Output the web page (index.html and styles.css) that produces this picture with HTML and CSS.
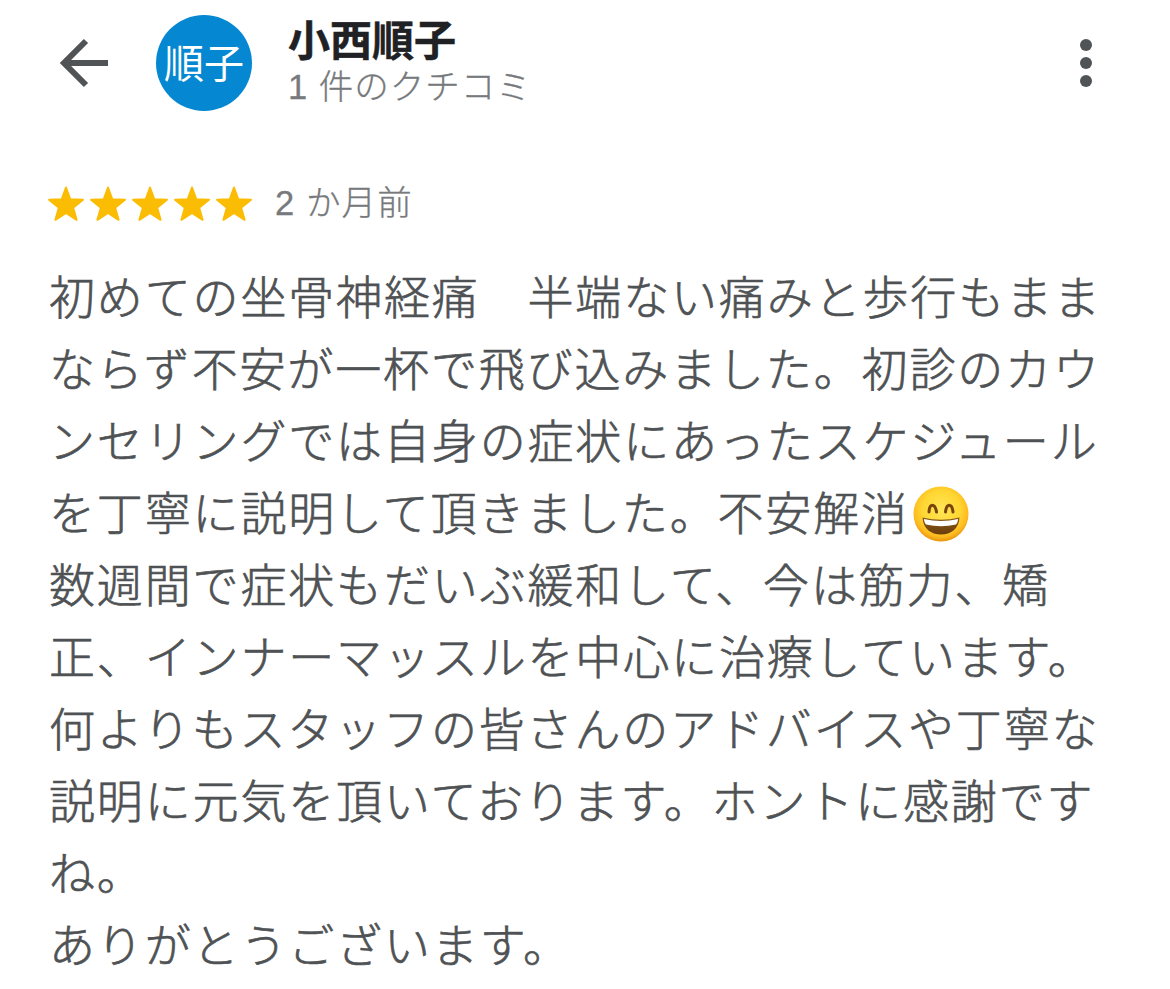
FILE: index.html
```html
<!DOCTYPE html>
<html lang="ja">
  <head>
    <meta charset="UTF-8" />
    <meta name="viewport" content="width=device-width, initial-scale=1.0" />
    <title>クチコミ</title>
    <link rel="stylesheet" href="styles.css">
  </head>
  <body>
    <header class="header">
      <button class="back" aria-label="戻る">
        <svg width="50" height="50" viewBox="0 0 50 50">
          <path d="M49 25H5M27 3L5 25l22 22" />
        </svg>
      </button>
      <div class="avatar">順子</div>
      <div class="author">
        <h1>小西順子</h1>
        <p>1 件のクチコミ</p>
      </div>
      <button class="menu" aria-label="メニュー">
        <svg width="12" height="50" viewBox="0 0 12 50">
          <circle cx="6" cy="7" r="6" />
          <circle cx="6" cy="25" r="6" />
          <circle cx="6" cy="43" r="6" />
        </svg>
      </button>
    </header>

    <div class="rating">
      <svg class="stars" width="204" height="36" viewBox="0 0 204 36">
        <defs>
          <path id="star" d="M18 1.500l4.300 11.800 12.700.5-9.900 7.800 3.500 12.200L18 26.800 7.400 33.800l3.500-12.200L1 13.800l12.700-.5z" />
        </defs>
        <use href="#star" x="0" />
        <use href="#star" x="42" />
        <use href="#star" x="84" />
        <use href="#star" x="126" />
        <use href="#star" x="168" />
      </svg>
      <span class="date">2 か月前</span>
    </div>

    <div class="review">
      <p>初めての坐骨神経痛　半端ない痛みと歩行もまま</p>
      <p>ならず不安が一杯で飛び込みました。初診のカウ</p>
      <p>ンセリングでは自身の症状にあったスケジュール</p>
      <p class="with-emoji">
        <span>を丁寧に説明して頂きました。不安解消</span>
        <svg class="emoji" width="56" height="56" viewBox="0 0 56 56" role="img" aria-label="笑顔">
          <defs>
            <radialGradient id="face" cx="50%" cy="42%" r="58%">
              <stop offset="0" stop-color="#ffe658" />
              <stop offset="0.6" stop-color="#ffd631" />
              <stop offset="0.85" stop-color="#fdbb1f" />
              <stop offset="1" stop-color="#e8920d" />
            </radialGradient>
            <linearGradient id="mouth" x1="0" y1="0" x2="0" y2="1">
              <stop offset="0" stop-color="#8a5a1c" />
              <stop offset="1" stop-color="#6b3d0c" />
            </linearGradient>
          </defs>
          <circle cx="28" cy="28" r="27.500" fill="url(#face)" />
          <path class="eye" d="M16 26c.5-9 6-9 7.500 0M32.500 26c1-9 6.500-9 7.500 0" />
          <path d="M9.500 31.500Q28 36 46.500 31.500C46 42.500 38 48.500 28 48.500S10 42.500 9.500 31.500z" fill="url(#mouth)" />
          <path d="M11 33Q28 37 45 33C45 35.500 44 37.500 43 38.500Q28 42 13 38.500C12 37.500 11 35.500 11 33z" fill="#fff" />
        </svg>
      </p>
      <p>数週間で症状もだいぶ緩和して、今は筋力、矯</p>
      <p>正、インナーマッスルを中心に治療しています。</p>
      <p>何よりもスタッフの皆さんのアドバイスや丁寧な</p>
      <p>説明に元気を頂いております。ホントに感謝です</p>
      <p>ね。</p>
      <p>ありがとうございます。</p>
    </div>
  </body>
</html>
```

FILE: styles.css
```css
body {
  margin: 0;
  background: #fff;
  color: #4f5254;
  font-family: "Liberation Sans", "Noto Sans CJK JP", sans-serif;
}
h1,
p {
  margin: 0;
}
button {
  padding: 0;
  border: 0;
  background: none;
}
.header {
  display: flex;
  height: 126px;
  align-items: center;
  padding: 0 78px 0 59px;
}
.back svg,
.menu svg {
  display: block;
}
.back path {
  fill: none;
  stroke: #515456;
  stroke-width: 6;
}
.menu {
  margin-left: auto;
}
.menu circle {
  fill: #515456;
}
.avatar {
  width: 96px;
  height: 96px;
  margin-left: 47px;
  border-radius: 50%;
  background: #0588d1;
  color: #fff;
  font-size: 40px;
  line-height: 98px;
  text-align: center;
}
.author {
  margin-left: 36px;
}
.author h1 {
  color: #202124;
  font-size: 42px;
  line-height: 48px;
  -webkit-text-stroke: 0.5px #202124;
}
.author p {
  color: #77797c;
  font-size: 34.5px;
  font-weight: 300;
  letter-spacing: 1px;
  line-height: 43px;
  -webkit-text-stroke: 0.3px #77797c;
}
.rating {
  display: flex;
  align-items: center;
  height: 48px;
  margin: 54px 0 0 48px;
}
.stars {
  fill: #fbbc04;
  stroke: #fbbc04;
  stroke-width: 2;
  stroke-linejoin: round;
}
.date {
  margin: -2px 0 0 23px;
  color: #77797c;
  font-size: 34.5px;
  font-weight: 300;
  letter-spacing: 1.1px;
  line-height: 44px;
  -webkit-text-stroke: 0.3px #77797c;
}
.review {
  margin: 34px 0 0 49px;
  font-size: 46px;
  font-weight: 300;
  letter-spacing: 1.85px;
  line-height: 72px;
  white-space: nowrap;
  -webkit-text-stroke: 0.65px #4f5254;
}
.review p {
  height: 72px;
}
.with-emoji {
  display: flex;
  align-items: center;
}
.emoji {
  margin-left: 4px;
}
.eye {
  fill: none;
  stroke: #7a430a;
  stroke-width: 3;
  stroke-linecap: round;
}
```
